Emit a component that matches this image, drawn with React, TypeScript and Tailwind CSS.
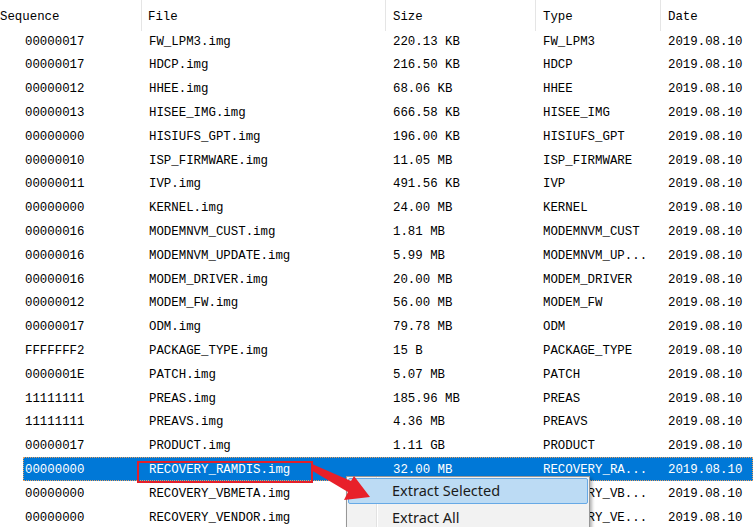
import React from 'react';

type Row = {
  seq: string;
  file: string;
  size: string;
  type: string;
  date: string;
  selected?: boolean;
};

const rows: Row[] = [
  { seq: '00000017', file: 'FW_LPM3.img', size: '220.13 KB', type: 'FW_LPM3', date: '2019.08.10' },
  { seq: '00000017', file: 'HDCP.img', size: '216.50 KB', type: 'HDCP', date: '2019.08.10' },
  { seq: '00000012', file: 'HHEE.img', size: '68.06 KB', type: 'HHEE', date: '2019.08.10' },
  { seq: '00000013', file: 'HISEE_IMG.img', size: '666.58 KB', type: 'HISEE_IMG', date: '2019.08.10' },
  { seq: '00000000', file: 'HISIUFS_GPT.img', size: '196.00 KB', type: 'HISIUFS_GPT', date: '2019.08.10' },
  { seq: '00000010', file: 'ISP_FIRMWARE.img', size: '11.05 MB', type: 'ISP_FIRMWARE', date: '2019.08.10' },
  { seq: '00000011', file: 'IVP.img', size: '491.56 KB', type: 'IVP', date: '2019.08.10' },
  { seq: '00000000', file: 'KERNEL.img', size: '24.00 MB', type: 'KERNEL', date: '2019.08.10' },
  { seq: '00000016', file: 'MODEMNVM_CUST.img', size: '1.81 MB', type: 'MODEMNVM_CUST', date: '2019.08.10' },
  { seq: '00000016', file: 'MODEMNVM_UPDATE.img', size: '5.99 MB', type: 'MODEMNVM_UP...', date: '2019.08.10' },
  { seq: '00000016', file: 'MODEM_DRIVER.img', size: '20.00 MB', type: 'MODEM_DRIVER', date: '2019.08.10' },
  { seq: '00000012', file: 'MODEM_FW.img', size: '56.00 MB', type: 'MODEM_FW', date: '2019.08.10' },
  { seq: '00000017', file: 'ODM.img', size: '79.78 MB', type: 'ODM', date: '2019.08.10' },
  { seq: 'FFFFFFF2', file: 'PACKAGE_TYPE.img', size: '15 B', type: 'PACKAGE_TYPE', date: '2019.08.10' },
  { seq: '0000001E', file: 'PATCH.img', size: '5.07 MB', type: 'PATCH', date: '2019.08.10' },
  { seq: '11111111', file: 'PREAS.img', size: '185.96 MB', type: 'PREAS', date: '2019.08.10' },
  { seq: '11111111', file: 'PREAVS.img', size: '4.36 MB', type: 'PREAVS', date: '2019.08.10' },
  { seq: '00000017', file: 'PRODUCT.img', size: '1.11 GB', type: 'PRODUCT', date: '2019.08.10' },
  { seq: '00000000', file: 'RECOVERY_RAMDIS.img', size: '32.00 MB', type: 'RECOVERY_RA...', date: '2019.08.10', selected: true },
  // sizes of the last two rows sit under the context menu
  { seq: '00000000', file: 'RECOVERY_VBMETA.img', size: '', type: 'RECOVERY_VB...', date: '2019.08.10' },
  { seq: '00000000', file: 'RECOVERY_VENDOR.img', size: '', type: 'RECOVERY_VE...', date: '2019.08.10' },
];

const mono = "font-['Liberation_Mono','DejaVu_Sans_Mono',monospace] text-[12.4px]";

const App: React.FC = () => {
  return (
    <div className={`relative w-[753px] h-[527px] overflow-hidden bg-white text-black ${mono}`}>
      {/* Header */}
      <div className="flex h-[29px]">
        <div className="w-[141px] pt-[8px]">Sequence</div>
        <div className="w-[244px] h-[31px] border-l border-[#e5e5e5] pl-[6px] pt-[8px]">File</div>
        <div className="w-[150px] h-[31px] border-l border-[#e5e5e5] pl-[7px] pt-[8px]">Size</div>
        <div className="w-[125px] h-[31px] border-l border-[#e5e5e5] pl-[7px] pt-[8px]">Type</div>
        <div className="flex-1 h-[31px] border-l border-[#e5e5e5] pl-[7px] pt-[8px]">Date</div>
      </div>

      {/* Rows */}
      {rows.map((r, i) => (
        <div key={i} className="flex h-[23.8px]">
          <div className="w-[23px]" />
          <div
            className={`flex flex-1 items-center pt-[2px] ${
              r.selected
                ? 'bg-[#0078d7] text-white border border-dotted border-[#e8a060]'
                : 'border border-transparent'
            }`}
          >
            <div className="w-[117px] pl-[1px] whitespace-nowrap">{r.seq}</div>
            <div className="w-[244px] pl-[8px] whitespace-nowrap">{r.file}</div>
            <div className="w-[150px] pl-[8px] whitespace-nowrap">{r.size}</div>
            <div className="w-[125px] pl-[8px] whitespace-nowrap">{r.type}</div>
            <div className="flex-1 pl-[8px] whitespace-nowrap">{r.date}</div>
          </div>
        </div>
      ))}

      {/* Red highlight box */}
      <div className="absolute left-[137px] top-[461px] w-[176px] h-[22px] border-2 border-[#e3202a]" />

      {/* Red arrow */}
      <svg className="absolute left-0 top-0 pointer-events-none z-20" width="753" height="527">
        <polygon
          points="312,464 351,481 354,476 370,497 344,500 348,492 311,470"
          fill="#e8202a"
        />
      </svg>

      {/* Context menu */}
      <div className="absolute left-[346px] top-[476px] w-[244px] h-[70px] bg-[#f2f2f2] border border-[#979797] shadow-[2px_2px_3px_rgba(0,0,0,0.3)] z-10 font-['Noto_Sans','Open_Sans',sans-serif] text-[14.5px] text-[#1a1a1a]">
        <div className="absolute left-[29px] top-0 bottom-0 w-px bg-[#e2e2e2]" />
        <div className="absolute left-[30px] top-0 bottom-0 w-px bg-white" />
        <div className="relative pt-[1px] px-[1px]">
          <div className="h-[26px] flex items-center pl-[43px] bg-[#bcdbf4] border border-[#66a9e6] rounded-[2px]">
            Extract Selected
          </div>
          <div className="h-[27px] flex items-center pl-[44px]">Extract All</div>
        </div>
      </div>
    </div>
  );
};

export default App;
